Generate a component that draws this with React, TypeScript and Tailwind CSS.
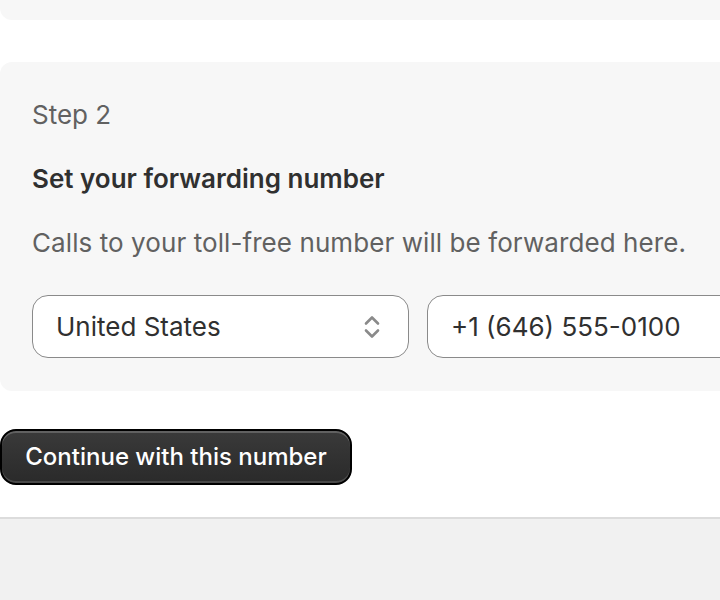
import React from 'react';

function SelectIcon() {
  return (
    <svg width="20" height="28" viewBox="0 0 20 28" fill="none" className="shrink-0">
      <path d="M4 10.5 10 4.5l6 6" stroke="#8a8a8a" strokeWidth="2.6" strokeLinecap="round" strokeLinejoin="round" />
      <path d="M4 17.5l6 6 6-6" stroke="#8a8a8a" strokeWidth="2.6" strokeLinecap="round" strokeLinejoin="round" />
    </svg>
  );
}

export default function App() {
  return (
    <div
      className="w-[720px] h-[600px] overflow-hidden bg-white flex flex-col text-[#303030]"
      style={{ fontFamily: 'Inter, "Noto Sans", sans-serif' }}
    >
      {/* previous step card, mostly scrolled away */}
      <div className="h-[20px] shrink-0 bg-[#f7f7f7] rounded-bl-[12px]" />

      <div className="mt-[42px] shrink-0 bg-[#f7f7f7] rounded-l-[12px] pl-[32px] pt-[33px] pb-[33px] flex flex-col">
        <p className="text-[26px] leading-[40px] text-[#616161]">Step 2</p>
        <h2 className="mt-[24px] text-[26px] leading-[40px] font-semibold">Set your forwarding number</h2>
        <p className="mt-[24px] text-[26px] leading-[40px] tracking-[0.08px] text-[#616161] whitespace-nowrap">
          Calls to your toll-free number will be forwarded here.
        </p>
        <div className="mt-[32px] flex gap-[18px]">
          <div className="w-[377px] h-[63px] shrink-0 bg-white border-[1.5px] border-[#8a8a8a] rounded-[16px] flex items-center justify-between pl-[23px] pr-[26px]">
            <span className="text-[26px]">United States</span>
            <SelectIcon />
          </div>
          <div className="w-[400px] h-[63px] shrink-0 bg-white border-[1.5px] border-[#8a8a8a] rounded-[16px] flex items-center pl-[23px]">
            <span className="text-[26px] whitespace-nowrap">+1 (646) 555-0100</span>
          </div>
        </div>
      </div>

      <div className="mt-[38px] shrink-0">
        <button className="h-[56px] w-[352px] rounded-[16px] bg-gradient-to-b from-[#3a3a3a] to-[#2a2a2a] border-[2px] border-black shadow-[inset_0_2px_0_rgba(255,255,255,0.2),inset_0_-2px_0_rgba(255,255,255,0.15)] text-white text-[24px] font-medium">
          Continue with this number
        </button>
      </div>

      <div className="mt-[32px] flex-1 bg-[#f1f1f1] border-t-[2px] border-[#dcdcdc]" />
    </div>
  );
}
